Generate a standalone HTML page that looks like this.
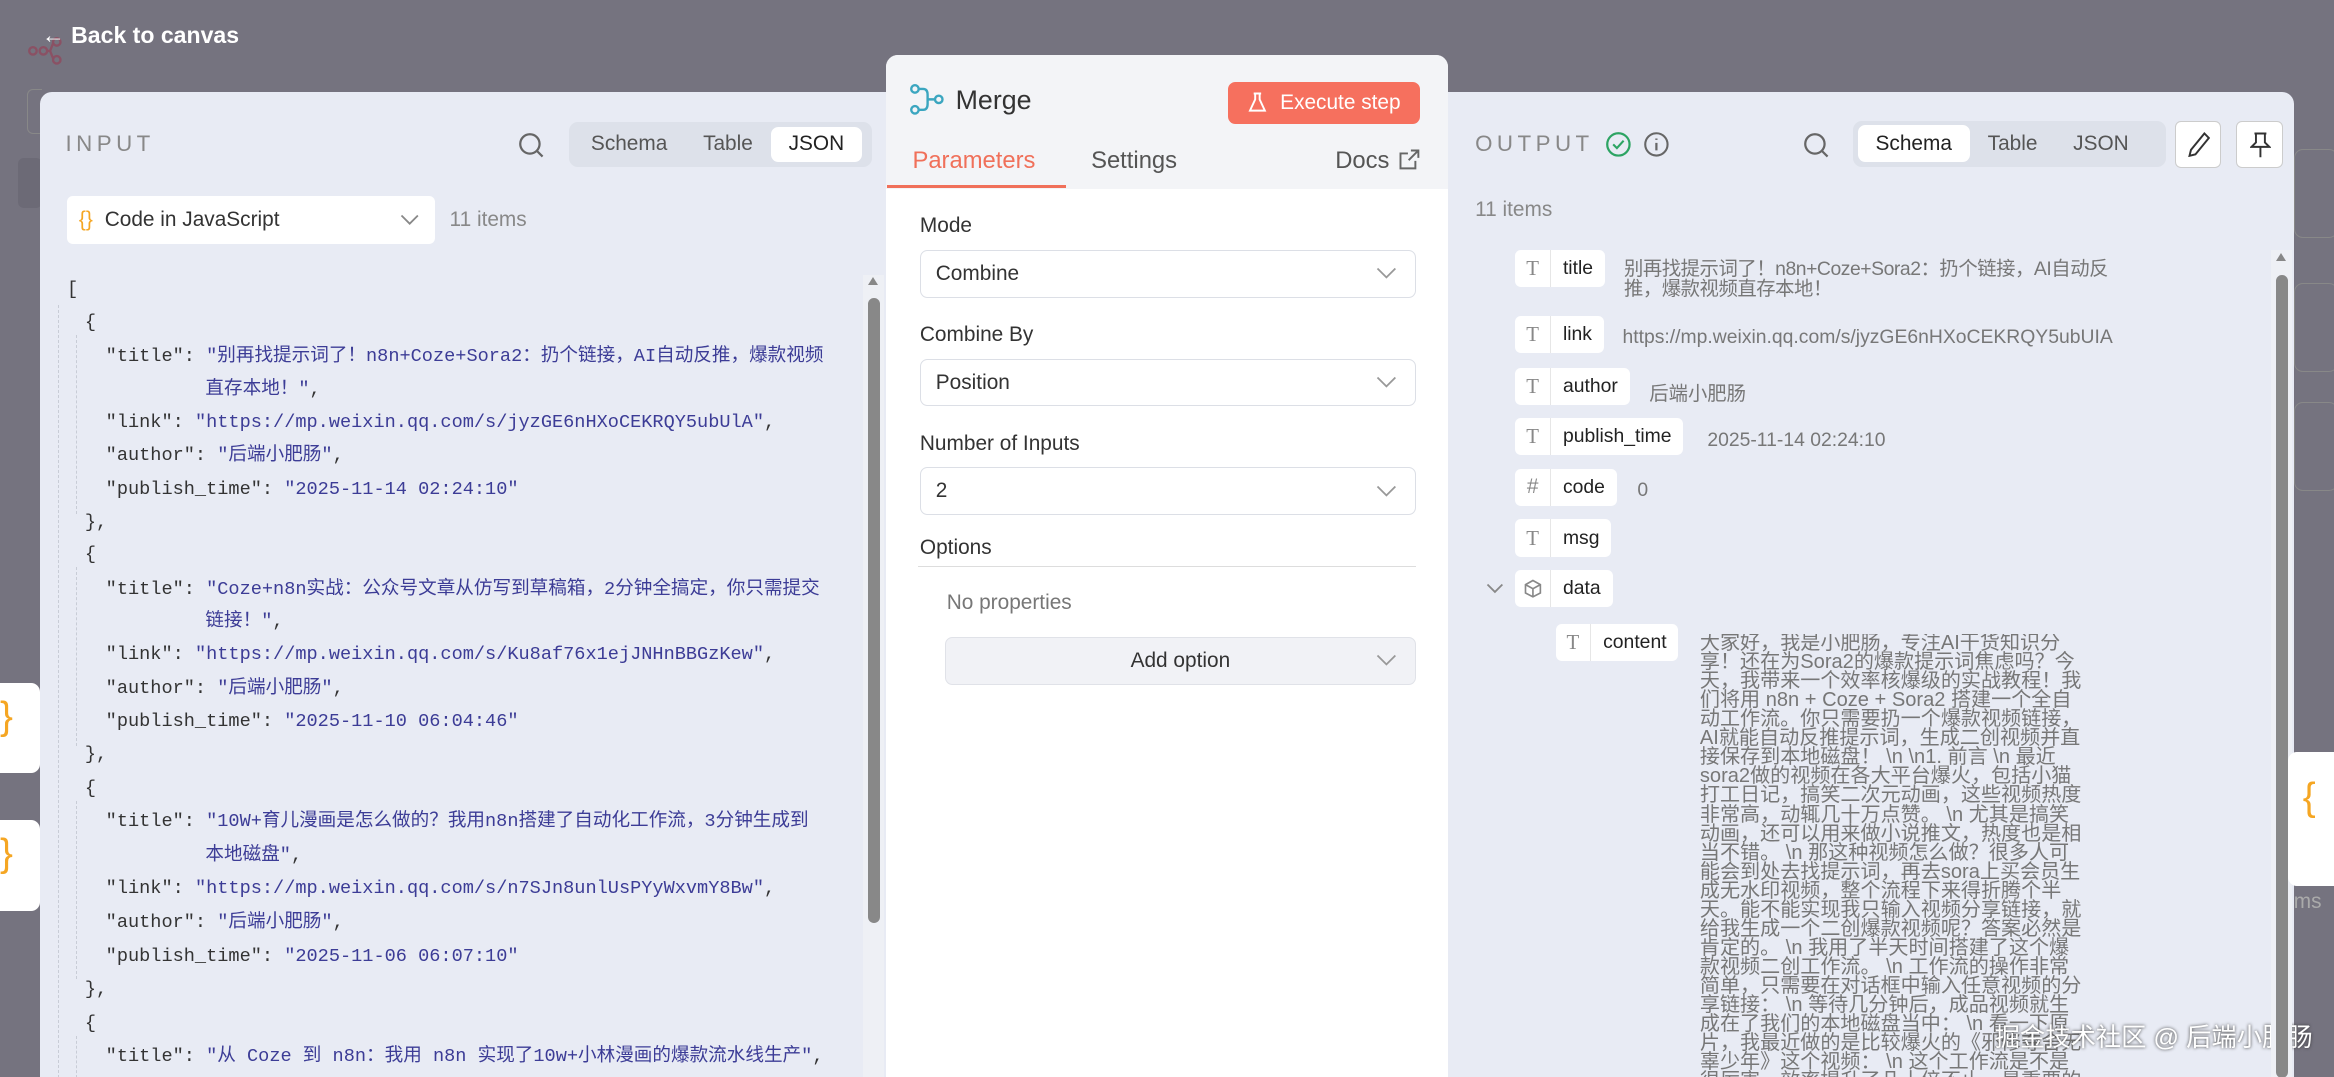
<!DOCTYPE html>
<html><head><meta charset="utf-8">
<style>
*{box-sizing:border-box;margin:0;padding:0}
html,body{width:2334px;height:1077px;overflow:hidden;background:#75737f}
#r{zoom:1.48852;position:relative;width:1568px;height:724px;overflow:hidden;background:#75737f;font-family:"Liberation Sans","Noto Sans CJK SC",sans-serif}
.a{position:absolute}
.mono{font-family:"Liberation Mono","Noto Sans CJK SC",monospace}
.seg{position:absolute;background:#dde1ea;border-radius:6px;display:flex;align-items:center;padding:3px;font-size:14px;color:#555}
.seg span{padding:0 12px;height:100%;display:flex;align-items:center;border-radius:5px}
.seg .on{background:#fff;color:#222}
.jl{position:absolute;font-size:12.5px;color:#333;white-space:nowrap;line-height:16px}
.v{color:#3c3c96}
.pill{position:absolute;height:25px;background:#fff;border-radius:4px;display:flex;align-items:center;font-size:13px;color:#222}
.pill i{font-style:normal;width:24px;text-align:center;color:#888;border-right:1px solid #e6e6e6;height:100%;display:flex;align-items:center;justify-content:center;font-family:"Liberation Serif",serif;font-size:14px}
.pill b{font-weight:normal;padding:0 8px}
.val{position:absolute;font-size:13px;color:#777}
.sel{position:absolute;left:618px;width:333px;height:32px;border:1px solid #dcdfe6;border-radius:5px;font-size:14px;color:#333;padding:0 10px;display:flex;align-items:center;background:#fff}
.chev{position:absolute;right:12px;top:11px}
.lbl{position:absolute;left:618px;font-size:14px;color:#333}
</style></head><body><div id="r">
<div class="a" style="left:18px;top:24px;opacity:.5">
<svg width="30" height="20"><g fill="none" stroke="#a0304a" stroke-width="1.6"><circle cx="4" cy="10" r="2.5"/><circle cx="11" cy="10" r="2.5"/><circle cx="20" cy="4" r="2.5"/><circle cx="20" cy="16" r="2.5"/><path d="M13.5 10h2l2-5M15.5 10l2 5"/></g></svg></div>
<div class="a" style="left:28px;top:15px;color:#fff;font-size:15.5px;font-weight:bold">&#8592; Back to canvas</div>
<div class="a" style="left:18px;top:60px;width:10px;height:30px;border:1px solid #888;border-right:none;border-radius:4px 0 0 4px"></div>
<div class="a" style="left:12px;top:106px;width:16px;height:34px;background:#6c6a76;border-radius:4px"></div>

<div class="a" style="left:0;top:459px;width:27px;height:60px;background:#fff;border-radius:0 6px 6px 0;color:#f5a623;font-size:26px;padding:8px 0 0 0">}</div>
<div class="a" style="left:0;top:551px;width:27px;height:61px;background:#fff;border-radius:0 6px 6px 0;color:#f5a623;font-size:26px;padding:8px 0 0 0">}</div>

<div class="a" style="left:27px;top:62px;width:575px;height:662px;background:#e8ebf4;border-radius:8px 0 0 0"></div>
<div class="a" style="left:44px;top:88px;font-size:15px;letter-spacing:3px;color:#888">INPUT</div>
<svg class="a" style="left:348px;top:89px" width="18" height="18"><circle cx="8" cy="8" r="6.5" fill="none" stroke="#666" stroke-width="1.5"/><path d="M12.5 12.5l4 4" stroke="#666" stroke-width="1.5"/></svg>
<div class="seg" style="left:382px;top:82px;width:204px;height:30px"><span>Schema</span><span>Table</span><span class="on">JSON</span></div>
<div class="a" style="left:45px;top:132px;width:247px;height:32px;background:#fff;border-radius:4px;font-size:14px;color:#333;display:flex;align-items:center;padding-left:8px"><span style="color:#f5a623;margin-right:8px">{}</span>Code in JavaScript
<svg style="position:absolute;right:10px;top:12px" width="13" height="8"><path d="M1 1l5.5 5.5L12 1" fill="none" stroke="#888" stroke-width="1.2"/></svg></div>
<div class="a" style="left:302px;top:140px;font-size:14px;color:#888">11 items</div>
<div class="a" style="left:39px;top:205px;height:519px;border-left:1px dashed #c8ccd6"></div>
<div class="a" style="left:51px;top:225px;height:120px;border-left:1px dashed #c8ccd6"></div>
<div class="a" style="left:51px;top:381px;height:120px;border-left:1px dashed #c8ccd6"></div>
<div class="a" style="left:51px;top:538px;height:120px;border-left:1px dashed #c8ccd6"></div>
<div class="a" style="left:51px;top:696px;height:28px;border-left:1px dashed #c8ccd6"></div>
<div class="mono">
<div class="jl" style="left:45px;top:187px">[</div>
<div class="jl" style="left:57px;top:209px">{</div>
<div class="jl" style="left:71px;top:232px">"title":  <span class="v">"别再找提示词了！n8n+Coze+Sora2：扔个链接，AI自动反推，爆款视频</span></div>
<div class="jl" style="left:138px;top:254px"><span class="v">直存本地！"</span>,</div>
<div class="jl" style="left:71px;top:276px">"link":  <span class="v">"https://mp.weixin.qq.com/s/jyzGE6nHXoCEKRQY5ubUlA"</span>,</div>
<div class="jl" style="left:71px;top:298px">"author":  <span class="v">"后端小肥肠"</span>,</div>
<div class="jl" style="left:71px;top:321px">"publish_time":  <span class="v">"2025-11-14 02:24:10"</span></div>
<div class="jl" style="left:57px;top:343px">},</div>
<div class="jl" style="left:57px;top:365px">{</div>
<div class="jl" style="left:71px;top:388px">"title":  <span class="v">"Coze+n8n实战：公众号文章从仿写到草稿箱，2分钟全搞定，你只需提交</span></div>
<div class="jl" style="left:138px;top:410px"><span class="v">链接！"</span>,</div>
<div class="jl" style="left:71px;top:432px">"link":  <span class="v">"https://mp.weixin.qq.com/s/Ku8af76x1ejJNHnBBGzKew"</span>,</div>
<div class="jl" style="left:71px;top:455px">"author":  <span class="v">"后端小肥肠"</span>,</div>
<div class="jl" style="left:71px;top:477px">"publish_time":  <span class="v">"2025-11-10 06:04:46"</span></div>
<div class="jl" style="left:57px;top:499px">},</div>
<div class="jl" style="left:57px;top:522px">{</div>
<div class="jl" style="left:71px;top:544px">"title":  <span class="v">"10W+育儿漫画是怎么做的？我用n8n搭建了自动化工作流，3分钟生成到</span></div>
<div class="jl" style="left:138px;top:567px"><span class="v">本地磁盘"</span>,</div>
<div class="jl" style="left:71px;top:589px">"link":  <span class="v">"https://mp.weixin.qq.com/s/n7SJn8unlUsPYyWxvmY8Bw"</span>,</div>
<div class="jl" style="left:71px;top:612px">"author":  <span class="v">"后端小肥肠"</span>,</div>
<div class="jl" style="left:71px;top:635px">"publish_time":  <span class="v">"2025-11-06 06:07:10"</span></div>
<div class="jl" style="left:57px;top:657px">},</div>
<div class="jl" style="left:57px;top:680px">{</div>
<div class="jl" style="left:71px;top:702px">"title":  <span class="v">"从 Coze 到 n8n：我用 n8n 实现了10w+小林漫画的爆款流水线生产"</span>,</div>
</div>
<div class="a" style="left:580px;top:185px;width:14px;height:539px;background:#eef0f5"></div>
<div class="a" style="left:583px;top:186px;width:0;height:0;border:4px solid transparent;border-bottom:6px solid #888;border-top:none"></div>
<div class="a" style="left:583px;top:200px;width:8px;height:420px;background:#888;border-radius:4px"></div>

<div class="a" style="left:595px;top:37px;width:378px;height:687px;background:#fff;border-radius:8px 8px 0 0;overflow:hidden">
<div style="height:90px;background:#f3f4f7"></div>
</div>
<svg class="a" style="left:611px;top:56px" width="24" height="22"><g fill="none" stroke="#3ba6c0" stroke-width="1.6"><circle cx="4" cy="4" r="2.5"/><circle cx="4" cy="18" r="2.5"/><circle cx="20" cy="11" r="2.5"/><path d="M6.5 4h3q3 0 3 4v6q0 4-3 4h-3M12.5 11h5"/></g></svg>
<div class="a" style="left:642px;top:57px;font-size:18px;color:#333">Merge</div>
<div class="a" style="left:825px;top:55px;width:129px;height:28px;background:#f6705e;border-radius:5px;color:#fff;font-size:14px;display:flex;align-items:center;justify-content:center">
<svg width="14" height="14" style="margin-right:8px"><path d="M4.5 1h5M5.5 1v4L2 12.5h10L8.5 5V1" fill="none" stroke="#fff" stroke-width="1.3"/></svg>Execute step</div>
<div class="a" style="left:613px;top:99px;font-size:16px;color:#f0705a">Parameters</div>
<div class="a" style="left:596px;top:124px;width:120px;height:2px;background:#f0705a"></div>
<div class="a" style="left:733px;top:99px;font-size:16px;color:#555">Settings</div>
<div class="a" style="left:897px;top:99px;font-size:16px;color:#555">Docs</div>
<svg class="a" style="left:940px;top:100px" width="14" height="14"><path d="M8 1h5v5M13 1L6.5 7.5M11 8v5H1V3h5" fill="none" stroke="#666" stroke-width="1.3"/></svg>

<div class="lbl" style="top:144px">Mode</div>
<div class="sel" style="top:168px">Combine<svg class="chev" width="14" height="8"><path d="M1 1l6 6 6-6" fill="none" stroke="#999" stroke-width="1.2"/></svg></div>
<div class="lbl" style="top:217px">Combine By</div>
<div class="sel" style="top:241px">Position<svg class="chev" width="14" height="8"><path d="M1 1l6 6 6-6" fill="none" stroke="#999" stroke-width="1.2"/></svg></div>
<div class="lbl" style="top:290px">Number of Inputs</div>
<div class="sel" style="top:314px">2<svg class="chev" width="14" height="8"><path d="M1 1l6 6 6-6" fill="none" stroke="#999" stroke-width="1.2"/></svg></div>
<div class="lbl" style="top:360px">Options</div>
<div class="a" style="left:617px;top:380px;width:334px;height:1px;background:#ddd"></div>
<div class="a" style="left:636px;top:397px;font-size:14px;color:#777">No properties</div>
<div class="a" style="left:635px;top:428px;width:316px;height:32px;background:#f1f2f6;border:1px solid #e0e2e8;border-radius:5px;font-size:14px;color:#333;display:flex;align-items:center;justify-content:center">Add option<svg class="chev" width="14" height="8"><path d="M1 1l6 6 6-6" fill="none" stroke="#999" stroke-width="1.2"/></svg></div>

<div class="a" style="left:973px;top:62px;width:568px;height:662px;background:#e8ebf4;border-radius:0 8px 0 0"></div>
<div class="a" style="left:991px;top:88px;font-size:15px;letter-spacing:3px;color:#888">OUTPUT</div>
<svg class="a" style="left:1078px;top:88px" width="18" height="18"><circle cx="9" cy="9" r="7.5" fill="none" stroke="#2da463" stroke-width="1.5"/><path d="M5.5 9l2.5 2.5 4.5-5" fill="none" stroke="#2da463" stroke-width="1.4"/></svg>
<svg class="a" style="left:1104px;top:88px" width="18" height="18"><circle cx="9" cy="9" r="7.5" fill="none" stroke="#666" stroke-width="1.4"/><path d="M9 8v5M9 5v1" stroke="#666" stroke-width="1.5"/></svg>
<svg class="a" style="left:1211px;top:89px" width="18" height="18"><circle cx="8" cy="8" r="6.5" fill="none" stroke="#666" stroke-width="1.5"/><path d="M12.5 12.5l4 4" stroke="#666" stroke-width="1.5"/></svg>
<div class="seg" style="left:1245px;top:81px;width:210px;height:31px"><span class="on">Schema</span><span>Table</span><span>JSON</span></div>
<div class="a" style="left:1461px;top:81px;width:31px;height:32px;background:#fff;border:1px solid #ccc;border-radius:4px"><svg style="margin:7px 0 0 8px" width="15" height="17"><path d="M11 1l3 3-9 11-4 1 1-4z" fill="none" stroke="#333" stroke-width="1.3"/></svg></div>
<div class="a" style="left:1502px;top:81px;width:32px;height:32px;background:#fff;border:1px solid #ccc;border-radius:4px"><svg style="margin:7px 0 0 9px" width="14" height="18"><path d="M3 1h8M4 1v6L1 10h12L10 7V1M7 10v7" fill="none" stroke="#333" stroke-width="1.3"/></svg></div>
<div class="a" style="left:991px;top:133px;font-size:14px;color:#888">11 items</div>

<div class="pill" style="left:1018px;top:168px"><i>T</i><b>title</b></div>
<div class="val" style="left:1091px;top:175px;width:335px;line-height:13px;letter-spacing:-0.3px">别再找提示词了！n8n+Coze+Sora2：扔个链接，AI自动反推，爆款视频直存本地！</div>
<div class="pill" style="left:1018px;top:212px"><i>T</i><b>link</b></div>
<div class="val" style="left:1090px;top:219px">https://mp.weixin.qq.com/s/jyzGE6nHXoCEKRQY5ubUIA</div>
<div class="pill" style="left:1018px;top:247px"><i>T</i><b>author</b></div>
<div class="val" style="left:1108px;top:254px">后端小肥肠</div>
<div class="pill" style="left:1018px;top:281px"><i>T</i><b>publish_time</b></div>
<div class="val" style="left:1147px;top:288px">2025-11-14 02:24:10</div>
<div class="pill" style="left:1018px;top:315px"><i style="font-family:'Liberation Sans'">#</i><b>code</b></div>
<div class="val" style="left:1100px;top:322px">0</div>
<div class="pill" style="left:1018px;top:349px"><i>T</i><b>msg</b></div>
<svg class="a" style="left:998px;top:392px" width="12" height="8"><path d="M1 1l5 5 5-5" fill="none" stroke="#888" stroke-width="1.2"/></svg>
<div class="pill" style="left:1018px;top:383px"><i><svg width="12" height="13"><path d="M6 1l5 2.8v5.6L6 12 1 9.4V3.8zM1 3.8L6 6.5 11 3.8M6 6.5V12" fill="none" stroke="#888" stroke-width="1.1"/></svg></i><b>data</b></div>
<div class="pill" style="left:1045px;top:419px"><i>T</i><b>content</b></div>
<div class="val" style="left:1142px;top:426px;width:258px;line-height:12.8px;font-size:13.5px;overflow:hidden;height:298px">大家好，我是小肥肠，专注AI干货知识分享！还在为Sora2的爆款提示词焦虑吗？今天，我带来一个效率核爆级的实战教程！我们将用 n8n + Coze + Sora2 搭建一个全自动工作流。你只需要扔一个爆款视频链接，AI就能自动反推提示词，生成二创视频并直接保存到本地磁盘！ \n \n1. 前言 \n 最近sora2做的视频在各大平台爆火，包括小猫打工日记，搞笑二次元动画，这些视频热度非常高，动辄几十万点赞。 \n 尤其是搞笑动画，还可以用来做小说推文，热度也是相当不错。 \n 那这种视频怎么做？很多人可能会到处去找提示词，再去sora上买会员生成无水印视频，整个流程下来得折腾个半天。能不能实现我只输入视频分享链接，就给我生成一个二创爆款视频呢？答案必然是肯定的。 \n 我用了半天时间搭建了这个爆款视频二创工作流。 \n 工作流的操作非常简单，只需要在对话框中输入任意视频的分享链接： \n 等待几分钟后，成品视频就生成在了我们的本地磁盘当中： \n 看一下原片，我最近做的是比较爆火的《邪修夺舍无辜少年》这个视频： \n 这个工作流是不是很厉害，效率提升了几十倍不止，最重要的是你再也不用为找不到爆款视频的提示词而焦虑了，你要做的就是为工作流提供爆款视频链接~感兴趣就赶紧码住跟练，文末附送提示词哦~ \n \n2. 工作流搭建前置准备 \n 在工作流搭建前需要开通抖音助手MCP Server服务 \n ，打开网页https://bailian.console.a...</div>
<div class="a" style="left:1340px;top:684px;font-size:17px;color:#fff;text-shadow:0 0 2px #333">掘金技术社区 @ 后端小肥肠</div>
<div class="a" style="left:1526px;top:168px;width:14px;height:556px;background:#eef0f5"></div>
<div class="a" style="left:1529px;top:170px;width:0;height:0;border:4px solid transparent;border-bottom:6px solid #888;border-top:none"></div>
<div class="a" style="left:1529px;top:185px;width:8px;height:539px;background:#888;border-radius:4px"></div>

<div class="a" style="left:1541px;top:100px;width:30px;height:60px;border:1px solid #888;border-radius:6px"></div>
<div class="a" style="left:1541px;top:190px;width:30px;height:60px;border:1px solid #888;border-radius:6px"></div>
<div class="a" style="left:1541px;top:270px;width:30px;height:60px;border:1px solid #888;border-radius:6px"></div>
<div class="a" style="left:1537px;top:505px;width:35px;height:90px;background:#fff;border-radius:6px 0 0 6px;color:#f5a623;font-size:26px;padding:16px 0 0 10px">{</div>
<div class="a" style="left:1541px;top:598px;font-size:14px;color:#aaa">ms</div>
</div></body></html>
